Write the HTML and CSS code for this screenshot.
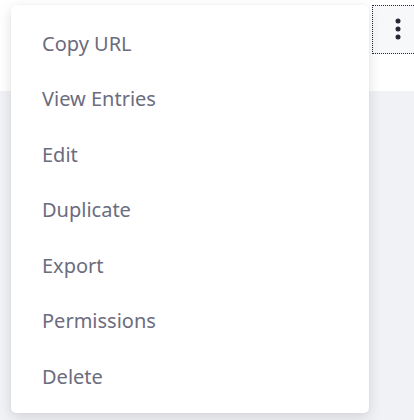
FILE: index.html
```html
<!DOCTYPE html>
<html lang="en">
<head>
<meta charset="utf-8">
<title>Menu</title>
<link rel="stylesheet" href="styles.css">
</head>
<body>
<div class="page">
  <header class="toolbar">
    <button class="kebab" type="button" aria-label="Actions">
      <svg width="6" height="22" viewBox="0 0 6 22" aria-hidden="true">
        <circle cx="3" cy="3" r="2.5" fill="#272833"/>
        <circle cx="3" cy="11" r="2.5" fill="#272833"/>
        <circle cx="3" cy="19" r="2.5" fill="#272833"/>
      </svg>
    </button>
  </header>
  <main class="content"></main>
  <ul class="dropdown">
    <li class="item">Copy URL</li>
    <li class="item">View Entries</li>
    <li class="item">Edit</li>
    <li class="item">Duplicate</li>
    <li class="item">Export</li>
    <li class="item">Permissions</li>
    <li class="item">Delete</li>
  </ul>
</div>
</body>
</html>
```

FILE: styles.css
```css
* { box-sizing: border-box; }
html, body {
  margin: 0;
  padding: 0;
  height: 100%;
}
body {
  font-family: "Noto Sans", "Open Sans", sans-serif;
  background: #f1f2f5;
  overflow: hidden;
}
.page {
  position: relative;
  height: 420px;
  display: flex;
  flex-direction: column;
}
.toolbar {
  height: 91px;
  background: #ffffff;
  position: relative;
}
.content {
  flex: 1;
  background: #f1f2f5;
}
.kebab {
  position: absolute;
  left: 372px;
  top: 5px;
  width: 50px;
  height: 49px;
  margin: 0;
  background: #f7f8f9;
  border: 1px dotted #272833;
  display: flex;
  align-items: center;
  justify-content: flex-start;
  padding: 0 0 2px 22px;
}
.dropdown {
  position: absolute;
  left: 11px;
  top: 5px;
  width: 358px;
  height: 408px;
  margin: 0;
  padding: 10px 0;
  list-style: none;
  background: #ffffff;
  border-radius: 5px;
  box-shadow: 0 4px 14px rgba(0, 0, 0, 0.13), 0 0 2px rgba(0, 0, 0, 0.06);
}
.item {
  height: 55.5px;
  display: flex;
  align-items: center;
  padding: 1px 31px 0;
  font-size: 20px;
  color: #6b6c7e;
  white-space: nowrap;
}
```
